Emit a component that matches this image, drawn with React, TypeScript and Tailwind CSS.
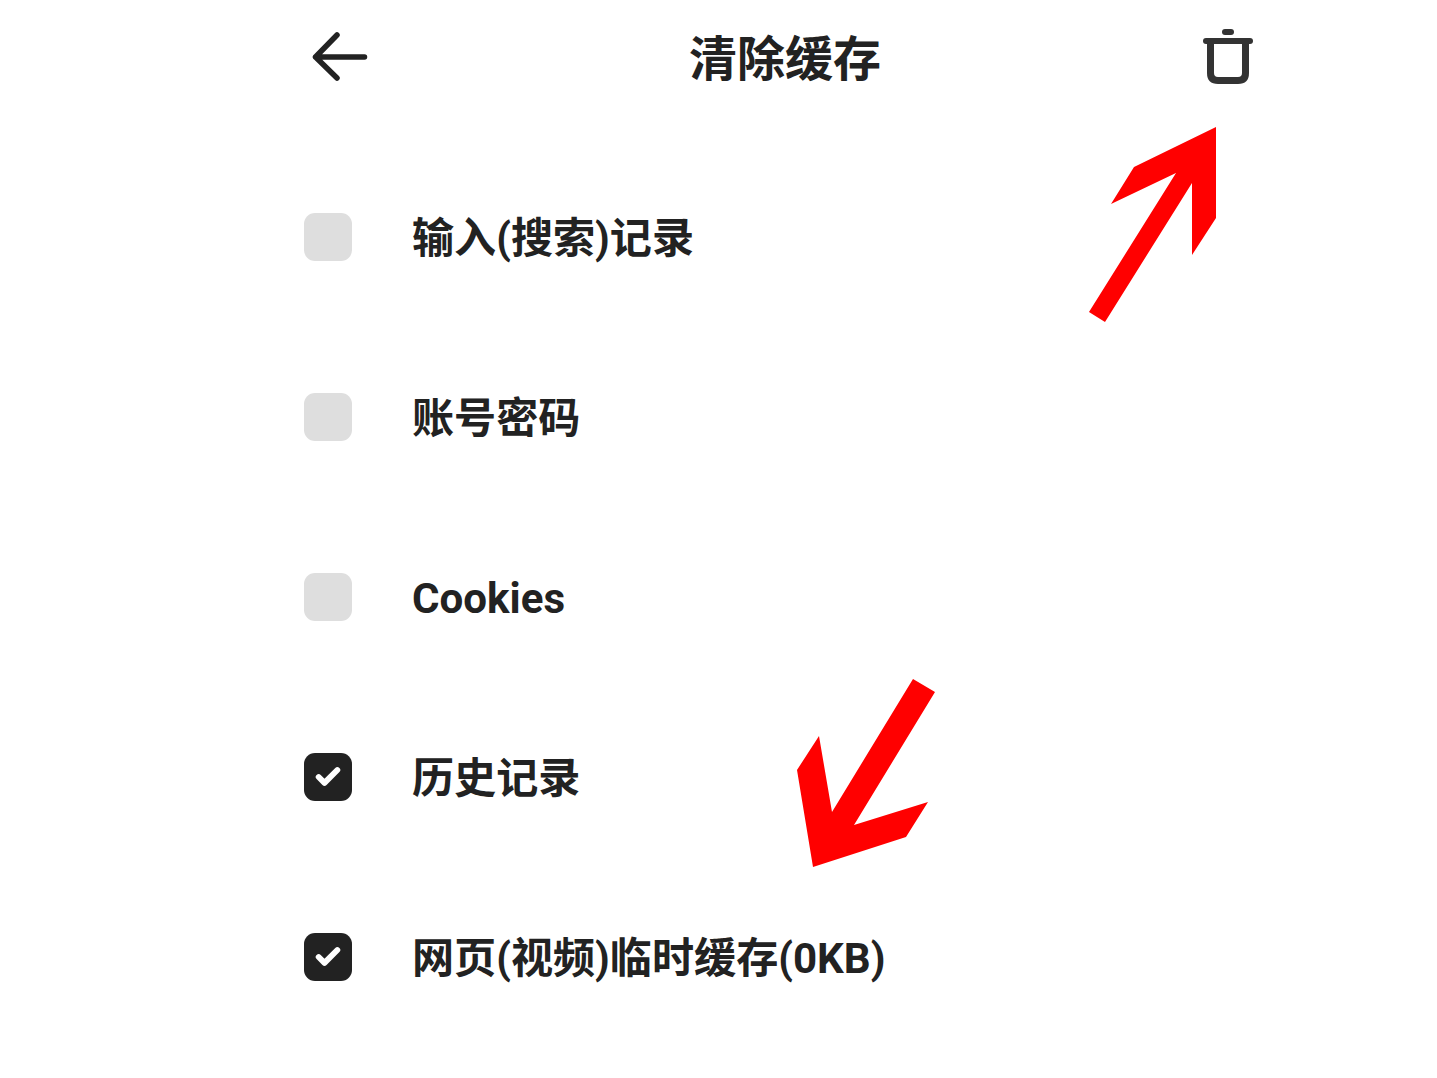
import { Check } from "lucide-react"

const rows = [
  { label: "输入(搜索)记录", checked: false },
  { label: "账号密码", checked: false },
  { label: "Cookies", checked: false },
  { label: "历史记录", checked: true },
  { label: "网页(视频)临时缓存(0KB)", checked: true },
]

export default function App() {
  return (
    <div className="relative min-h-[1078px] overflow-hidden bg-white font-['Roboto','Noto_Sans_CJK_SC',sans-serif] text-[#222222]">
      <div className="ml-[304px] w-[962px]">
        {/* Header */}
        <header className="grid h-[114px] grid-cols-[1fr_auto_1fr] items-center">
          <svg width="64" height="64" viewBox="0 0 64 64" fill="none" className="block">
            <path
              d="M33 10 L11.5 32 L33 53 M11.5 32 H60.5"
              stroke="#222222"
              strokeWidth="5.5"
              strokeLinecap="round"
              strokeLinejoin="round"
            />
          </svg>
          <h1 className="pt-[5px] text-[48px] leading-none font-bold">清除缓存</h1>
          <div className="flex justify-end pr-[12px]">
            <svg width="52" height="60" viewBox="0 0 52 60" fill="none" className="block">
              <path d="M23 5 H29" stroke="#333333" strokeWidth="6" strokeLinecap="round" />
              <path d="M4 14 H48" stroke="#333333" strokeWidth="6" strokeLinecap="round" />
              <path
                d="M8.5 14 V46 Q8.5 53.5 16 53.5 H36 Q43.5 53.5 43.5 46 V14"
                stroke="#333333"
                strokeWidth="7"
              />
            </svg>
          </div>
        </header>

        {/* Options */}
        <ul className="mt-[33px]">
          {rows.map((row) => (
            <li key={row.label} className="flex h-[180px] items-center gap-[60px]">
              {row.checked ? (
                <span className="flex h-[48px] w-[48px] items-center justify-center rounded-[11px] bg-[#222222]">
                  <Check size={28} color="#ffffff" strokeWidth={5} />
                </span>
              ) : (
                <span className="h-[48px] w-[48px] rounded-[11px] bg-[#dedede]" />
              )}
              <span className="pt-[4px] text-[42.1px] leading-none font-bold">{row.label}</span>
            </li>
          ))}
        </ul>
      </div>

      {/* Red annotation arrows */}
      <svg width="1437" height="1078" viewBox="0 0 1437 1078" className="pointer-events-none absolute top-0 left-0">
        <polygon
          fill="#ff0000"
          points="1216,127 1216,218 1192,255 1192,183 1105,322 1089,312 1176,173 1111,204 1134,167"
        />
        <polygon
          fill="#ff0000"
          points="913,679 935,692 854,825 928,802 906,837 813,867 797,770 819,736 832,812"
        />
      </svg>
    </div>
  )
}
